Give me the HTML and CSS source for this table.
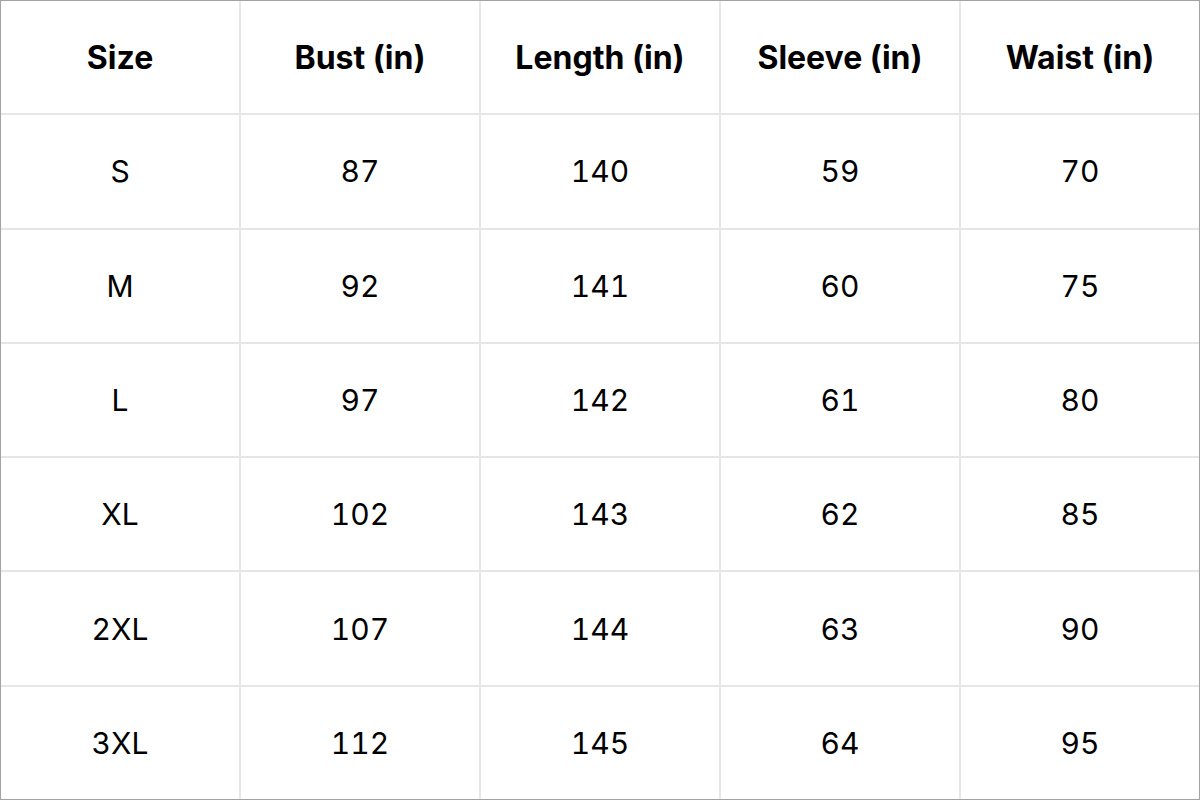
FILE: index.html
```html
<!DOCTYPE html>
<html>
<head>
<meta charset="utf-8">
<link rel="stylesheet" href="styles.css">
</head>
<body>
<div class="chart">
  <div class="cell head">Size</div>
  <div class="cell head">Bust (in)</div>
  <div class="cell head">Length (in)</div>
  <div class="cell head">Sleeve (in)</div>
  <div class="cell head">Waist (in)</div>

  <div class="cell">S</div><div class="cell">87</div><div class="cell">140</div><div class="cell">59</div><div class="cell">70</div>
  <div class="cell">M</div><div class="cell">92</div><div class="cell">141</div><div class="cell">60</div><div class="cell">75</div>
  <div class="cell">L</div><div class="cell">97</div><div class="cell">142</div><div class="cell">61</div><div class="cell">80</div>
  <div class="cell">XL</div><div class="cell">102</div><div class="cell">143</div><div class="cell">62</div><div class="cell">85</div>
  <div class="cell">2XL</div><div class="cell">107</div><div class="cell">144</div><div class="cell">63</div><div class="cell">90</div>
  <div class="cell">3XL</div><div class="cell">112</div><div class="cell">145</div><div class="cell">64</div><div class="cell">95</div>
</div>
</body>
</html>
```
FILE: styles.css
```css
html, body {
  margin: 0;
  padding: 0;
  background: #ffffff;
}
.chart {
  box-sizing: border-box;
  width: 1200px;
  height: 800px;
  border: 1px solid #a3a3a3;
  background: #e6e6e6;
  display: grid;
  grid-template-columns: repeat(5, 1fr);
  grid-template-rows: repeat(7, 1fr);
  gap: 2px;
  font-family: Inter, "Noto Sans", sans-serif;
  color: #000;
}
.cell {
  background: #fff;
  display: flex;
  align-items: center;
  justify-content: center;
  font-size: 30px;
  font-weight: 400;
  font-variant-numeric: tabular-nums;
}
.head {
  font-size: 32px;
  font-weight: 700;
  font-variant-numeric: normal;
}
```
